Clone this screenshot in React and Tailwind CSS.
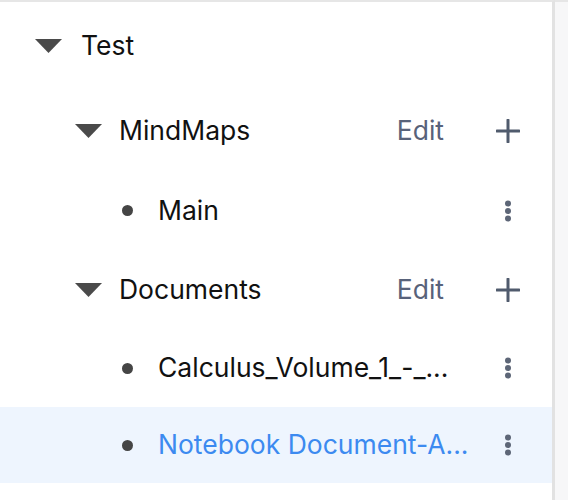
import React from "react";

const font = { fontFamily: "Inter, 'Noto Sans', sans-serif" };

function Tri() {
  return (
    <svg width="27" height="14" viewBox="0 0 27 14" className="shrink-0">
      <polygon points="0,0 27,0 13.5,14" fill="#4a4a4a" />
    </svg>
  );
}

function Dot() {
  return <span className="block w-[11px] h-[11px] rounded-full bg-[#454545] shrink-0" />;
}

function Plus() {
  return (
    <svg width="24" height="24" viewBox="0 0 24 24">
      <path d="M12 1v22M1 12h22" stroke="#505b6d" strokeWidth="3" strokeLinecap="round" />
    </svg>
  );
}

function More() {
  return (
    <svg width="8" height="22" viewBox="0 0 8 22">
      <circle cx="4" cy="3.5" r="3" fill="#5d6677" />
      <circle cx="4" cy="11" r="3" fill="#5d6677" />
      <circle cx="4" cy="18.5" r="3" fill="#5d6677" />
    </svg>
  );
}

function Folder({ label, h }) {
  return (
    <div className={`flex items-center pl-[75px] pr-[32px] ${h}`}>
      <Tri />
      <span className="ml-[17px] text-[26.5px] text-[#111]">{label}</span>
      <span className="ml-auto text-[26.5px] text-[#58627a]">Edit</span>
      <span className="ml-[52px] flex"><Plus /></span>
    </div>
  );
}

function Leaf({ label, h, active }) {
  return (
    <div className={`flex items-center pl-[122px] pr-[40px] ${h} ${active ? "bg-[#eef5fe]" : ""}`}>
      <Dot />
      <span className={`ml-[25px] text-[26.5px] truncate ${active ? "text-[#3c8af0]" : "text-[#111]"}`}>{label}</span>
      <span className="ml-auto pl-4 flex"><More /></span>
    </div>
  );
}

export default function App() {
  return (
    <div className="w-[568px] h-[500px] flex bg-[#f7f7f8] overflow-hidden" style={font}>
      <div className="w-[555px] h-full bg-white border-t-2 border-t-[#e6e6e6] border-r-[3px] border-r-[#e2e2e2] flex flex-col shrink-0">
        <div className="flex items-center pl-[35px] h-[88px]">
          <Tri />
          <span className="ml-[19px] text-[26.5px] text-[#111]">Test</span>
        </div>
        <Folder label="MindMaps" h="h-[81px]" />
        <Leaf label="Main" h="h-[79px]" />
        <Folder label="Documents" h="h-[79px]" />
        <Leaf label="Calculus_Volume_1_-_..." h="h-[78px]" />
        <Leaf label="Notebook Document-A..." h="h-[76px]" active />
      </div>
      <div className="flex-1 border-t-2 border-t-[#e6e6e6]" />
    </div>
  );
}
